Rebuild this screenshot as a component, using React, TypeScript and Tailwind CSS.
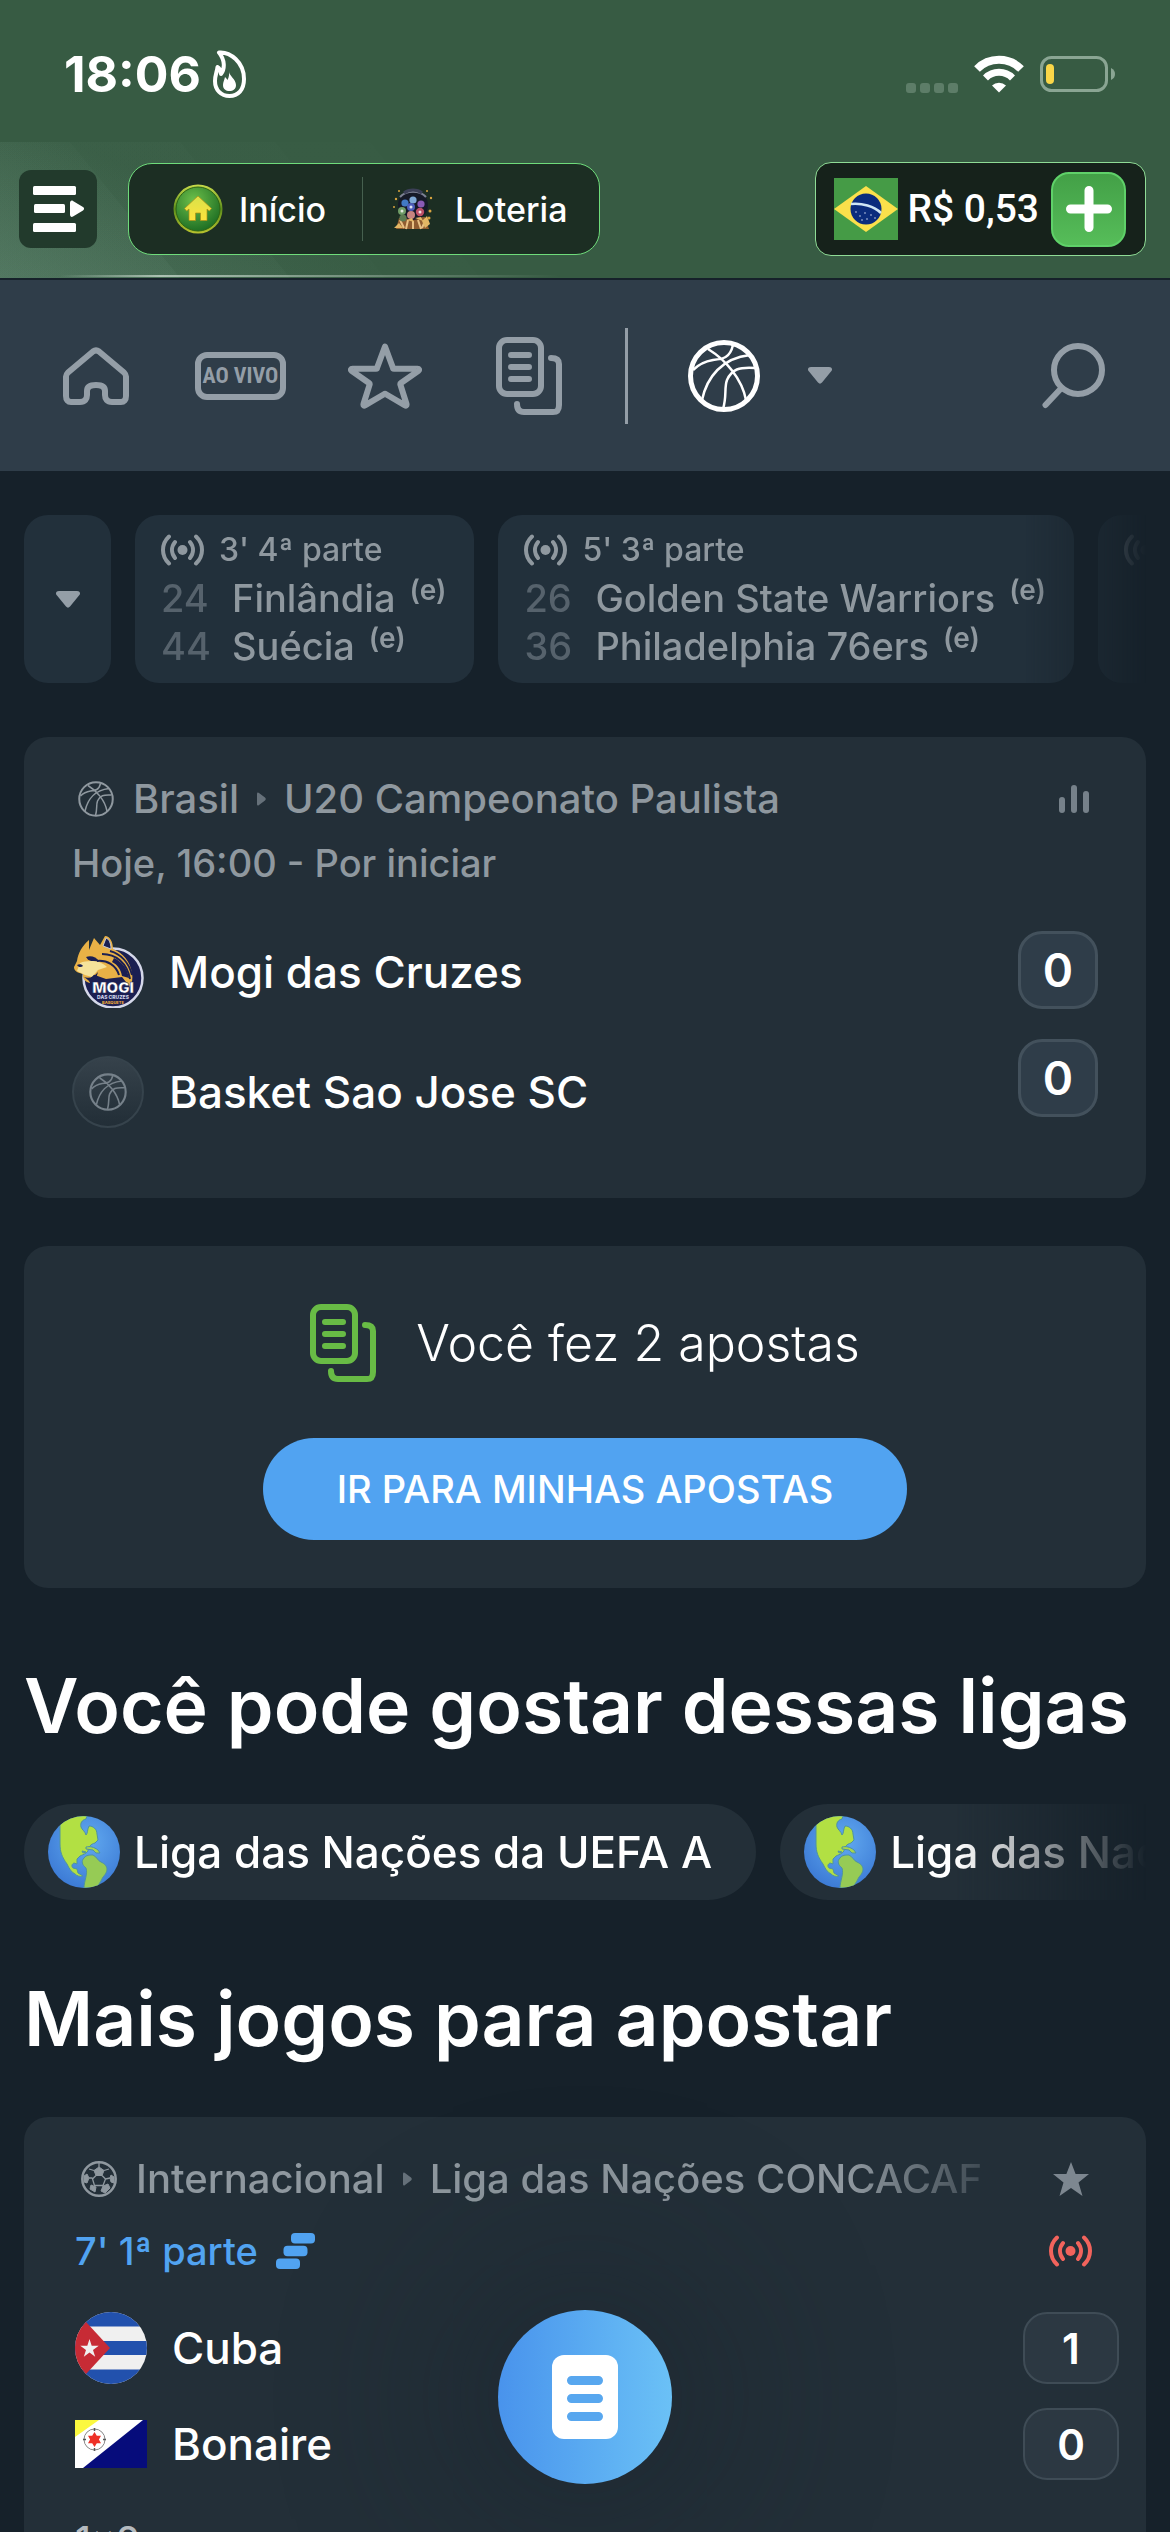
import type { ReactNode } from "react";

type IconProps = { className?: string };

const FlameIcon = ({ className }: IconProps) => (
  <svg viewBox="0 0 33 48" className={className} fill="none" aria-hidden="true">
    <path d="M6 2.500C17 1.500 31 12 31 29c0 11-6 17-14.500 17S2 40 2 31c0-6 2-9 2.500-14 2 1 3 3 3.500 7 4-5 4-14-2-21.500z" stroke="#fff" strokeWidth="4" strokeLinejoin="round" />
    <path d="M16 21c0 5 7 8 7 14 0 4-3 6-6.500 6S10 39 10 35c0-3 1.500-5 2-8 1 1 2 2 2.500 3 1.500-3 2-6 1.500-9z" fill="#fff" />
  </svg>
);

const WifiIcon = ({ className }: IconProps) => (
  <svg viewBox="0 0 50 38" className={className} fill="none" aria-hidden="true">
    <path d="M3 14a31 31 0 0 1 44 0" stroke="#fff" strokeWidth="8" />
    <path d="M11.500 23a19 19 0 0 1 27 0" stroke="#fff" strokeWidth="7" />
    <path d="M18 30.500a10 10 0 0 1 14 0L25 37.500z" fill="#fff" />
  </svg>
);

const BatteryIcon = ({ className }: IconProps) => (
  <svg viewBox="0 0 76 36" className={className} fill="none" aria-hidden="true">
    <rect x="1.500" y="1.500" width="65" height="33" rx="10" stroke="#8aa593" strokeWidth="3" />
    <path d="M71 12c3 1.500 4 3.500 4 6s-1 4.500-4 6z" fill="#8aa593" />
    <rect x="6" y="8" width="8" height="20" rx="4" fill="#fad648" />
  </svg>
);

const MenuIcon = ({ className }: IconProps) => (
  <svg viewBox="0 0 51 46" className={className} fill="#fff" aria-hidden="true">
    <rect x="0" y="0" width="43" height="9" rx="1.500" />
    <rect x="1" y="18" width="31" height="9" rx="1.500" />
    <rect x="0" y="37" width="43" height="9" rx="1.500" />
    <path d="M37 17c0-2 1.500-3 3-2l10 6c1.500 1 1.500 2.500 0 3.500l-10 6c-1.500 1-3 0-3-2z" />
  </svg>
);

const CasinoHomeIcon = ({ className }: IconProps) => (
  <svg viewBox="0 0 50 50" className={className} aria-hidden="true">
    <defs>
      <linearGradient id="coinRim" x1="0" y1="0" x2="0" y2="1">
        <stop offset="0" stopColor="#c9dc4b" />
        <stop offset="0.500" stopColor="#5f8f1c" />
        <stop offset="1" stopColor="#b7c22e" />
      </linearGradient>
      <radialGradient id="coinFace" cx="0.400" cy="0.300" r="0.800">
        <stop offset="0" stopColor="#6cbf4a" />
        <stop offset="1" stopColor="#15651f" />
      </radialGradient>
      <linearGradient id="coinHouse" x1="0" y1="0" x2="0" y2="1">
        <stop offset="0" stopColor="#d8e24a" />
        <stop offset="1" stopColor="#ffe23c" />
      </linearGradient>
    </defs>
    <circle cx="25" cy="25" r="24.500" fill="url(#coinRim)" />
    <circle cx="25" cy="25" r="22" fill="url(#coinFace)" stroke="#2c6414" strokeWidth="1" />
    <path d="M25 12L11.500 24.500l2.200 2.500 2.300-2v11.500h6.500V29h5v7.500H34V25l2.300 2 2.200-2.500z" fill="url(#coinHouse)" stroke="#b08f16" strokeWidth="0.700" />
  </svg>
);

const LotteryIcon = ({ className }: IconProps) => (
  <svg viewBox="0 0 44 44" className={className} aria-hidden="true">
    <path d="M8 31l-3 11h33l-4-12z" fill="#8f5c30" />
    <path d="M9 33l4 8M17 33l-2 9M22 34v8M27 33l3 9M34 34l-3 7" stroke="#e8c084" strokeWidth="2" />
    <circle cx="22" cy="18" r="15" fill="#161a28" />
    <path d="M9 10c6-7 20-7 26 0" stroke="#7d8194" strokeWidth="2" fill="none" />
    <path d="M13 6c5-4 13-4 18 0" stroke="#3b3f56" strokeWidth="3" fill="none" />
    <circle cx="14" cy="16" r="3.600" fill="#4179c4" />
    <circle cx="22" cy="13" r="3.600" fill="#7fa9d6" />
    <circle cx="30" cy="17" r="3.600" fill="#8a5ab5" />
    <circle cx="11" cy="24" r="4" fill="#6f9c67" />
    <circle cx="20" cy="20" r="4" fill="#4c5cb8" />
    <circle cx="29" cy="25" r="4.200" fill="#bb4f66" />
    <circle cx="20" cy="28" r="4" fill="#c68480" />
    <circle cx="12" cy="31" r="3.600" fill="#5c7b52" />
    <circle cx="11" cy="24" r="1.500" fill="#dfe6dc" />
    <circle cx="20" cy="20" r="1.500" fill="#dfe2f0" />
    <circle cx="29" cy="25" r="1.500" fill="#f0dde0" />
    <path d="M3 41l5-5 4 5zM31 34l5-5 3 8-5 4zM16 33l5-2 2 4zM24 31l6-1 2 4z" fill="#e3b765" />
    <g fill="#d9a441">
      <circle cx="5" cy="12" r="1.200" /><circle cx="40" cy="11" r="1.200" /><circle cx="39" cy="24" r="1.500" />
      <circle cx="3" cy="20" r="1" /><circle cx="8" cy="4" r="1" /><circle cx="36" cy="4" r="1" /><circle cx="38" cy="31" r="1.500" />
    </g>
  </svg>
);

const BrazilFlag = ({ className }: IconProps) => (
  <svg viewBox="0 0 64 62" className={className} role="img" aria-label="Brasil">
    <rect width="64" height="62" fill="#459b46" />
    <path d="M32 8l32 23-32 23L0 31z" fill="#fbe04b" />
    <circle cx="32" cy="31" r="15.500" fill="#0b2c7d" />
    <path d="M17 26c11-1 23 2 30 9" stroke="#cfe6f5" strokeWidth="2.500" fill="none" />
    <g fill="#c9d3ea">
      <circle cx="22" cy="34" r="0.800" /><circle cx="26" cy="38" r="0.800" /><circle cx="31" cy="35" r="0.800" />
      <circle cx="33" cy="41" r="0.800" /><circle cx="37" cy="37" r="0.800" /><circle cx="41" cy="40" r="0.800" /><circle cx="28" cy="42" r="0.800" />
    </g>
  </svg>
);

const HouseIcon = ({ className }: IconProps) => (
  <svg viewBox="0 0 66 58" className={className} fill="none" stroke="currentColor" strokeWidth="6" strokeLinejoin="round" aria-hidden="true">
    <path d="M30 4.500L5 25.500c-1.500 1.500-2 2.500-2 4V49c0 4 2 6 5 6h9c5 0 7-3 7-7v-4c0-4 3-6 9-6s9 2 9 6v4c0 4 2 7 7 7h9c3 0 5-2 5-6V29.500c0-1.500-.5-2.500-2-4L36 4.500c-2-1.500-4-1.500-6 0z" />
  </svg>
);

const StarOutline = ({ className }: IconProps) => (
  <svg viewBox="0 0 74 66" className={className} fill="none" stroke="currentColor" strokeWidth="6" strokeLinejoin="round" aria-hidden="true">
    <path d="M37 3.500l8 21.500c0 .500.500.700 1 .700h23.500c1.500 0 2 1 1 2L53 40c-.7.500-.8 1-.6 1.700L58.500 61c.3 1.500-.5 2-1.500 1.300L37.600 51c-.4-.3-.8-.3-1.200 0L17 62.300c-1 .7-1.800.2-1.500-1.300L21.600 41.700c.2-.7.100-1.200-.6-1.700L3.500 27.700c-1-1-.5-2 1-2H28c.5 0 1-.2 1-.7z" />
  </svg>
);

const SlipsIcon = ({ className }: IconProps) => (
  <svg viewBox="0 0 66 78" className={className} fill="none" stroke="currentColor" strokeWidth="6" strokeLinecap="round" aria-hidden="true">
    <rect x="3" y="3" width="42" height="54" rx="8" />
    <path d="M15 18h18M15 30h18M15 42h18M55 21c5 0 8 2 8 6v41c0 5-2 7-6 7H28c-5 0-7-3-7-8" />
  </svg>
);

const BasketballIcon = ({ className, ring = 5, seam = 2.5 }: IconProps & { ring?: number; seam?: number }) => (
  <svg viewBox="0 0 72 72" className={className} fill="none" stroke="currentColor" aria-hidden="true">
    <circle cx="36" cy="36" r="33.500" strokeWidth={ring} />
    <path d="M20 9c18 11 34 30 38 51M45 5c-3 13-10 14-20 15-9 1.500-15 5-20 10M62 15c-28 3-43 22-48 45M67 28c-16-1-23 1-28 12-3 8 0 16-4 29" strokeWidth={seam} />
  </svg>
);

const CaretDown = ({ className }: IconProps) => (
  <svg viewBox="0 0 24 17" className={className} fill="currentColor" aria-hidden="true">
    <path d="M3 0h18c3 0 4 2.500 2 4.500l-9 11c-1.300 1.500-2.700 1.500-4 0l-9-11C-1 2.500 0 0 3 0z" />
  </svg>
);

const CaretRight = ({ className }: IconProps) => (
  <svg viewBox="0 0 9 14" className={className} fill="currentColor" aria-hidden="true">
    <path d="M0 2c0-1.500 1-2 2-1l6 4.500c1 1 1 2 0 3L2 13c-1 1-2 .5-2-1z" />
  </svg>
);

const SearchIcon = ({ className }: IconProps) => (
  <svg viewBox="0 0 64 66" className={className} fill="none" stroke="currentColor" strokeWidth="6" strokeLinecap="round" aria-hidden="true">
    <circle cx="36" cy="27" r="24" />
    <path d="M18.500 46L3.500 62" />
  </svg>
);

const LiveIcon = ({ className }: IconProps) => (
  <svg viewBox="0 0 43 32" className={className} fill="none" stroke="currentColor" strokeWidth="4" strokeLinecap="round" aria-hidden="true">
    <circle cx="21.500" cy="16" r="5" fill="currentColor" stroke="none" />
    <path d="M14 8c-4 5-4 11 0 16M29 8c4 5 4 11 0 16M8 2.500C0 10 0 22 8 29.500M35 2.500c8 7.500 8 19.500 0 27" />
  </svg>
);

const BarsIcon = ({ className }: IconProps) => (
  <svg viewBox="0 0 30 28" className={className} fill="currentColor" aria-hidden="true">
    <rect x="0" y="12" width="6" height="16" rx="3" />
    <rect x="12" y="0" width="6" height="28" rx="3" />
    <rect x="24" y="6" width="6" height="22" rx="3" />
  </svg>
);

const MogiLogo = ({ className }: IconProps) => (
  <svg viewBox="0 0 72 72" className={className} role="img" aria-label="Mogi das Cruzes">
    <circle cx="41" cy="42" r="29.500" fill="#1b1f52" stroke="#d5d8ea" strokeWidth="2.500" />
    <path d="M17 14L22 2l6 7 5-9c5 0 8 6 8 13 10 4 17 12 19 24 1 6 0 10-2 14l-8-10-16 2-14-5-2 9c-5-1-8-5-7-9-5-1-9-3-9-7l3-6c1-8 5-15 12-21z" fill="#e9b146" />
    <path d="M31 10l3-8c3 1 5 5 5 11z" fill="#1b1f52" stroke="#c9cbd6" strokeWidth="1" />
    <path d="M14 21c5-2 10 0 13 4-5 1-10 1-13-4z" fill="#1b1f52" />
    <path d="M8 27c8-3 20-3 27 4l-9 3-6 7-7-2-8-4z" fill="#f6e29a" />
    <path d="M5 29c2-1 5-1 6 1-2 2-5 1-6-1z" fill="#1b1f52" />
    <path d="M42 22c8 4 13 10 15 20l-7-2c-1-6-4-11-10-14z" fill="#1b1f52" />
    <path d="M30 18c14 0 25 9 28 25M38 15c11 3 19 12 22 24M25 25c10-1 19 4 22 14" stroke="#1b1f52" strokeWidth="2" fill="none" />
    <path d="M12 41c5 2 10 0 14-5l-3 10-5 4c1-3 0-5-6-9z" fill="#1b1f52" />
    <text x="41" y="57" textAnchor="middle" fontFamily="Inter, sans-serif" fontWeight="900" fontSize="15" fill="#fff" stroke="#1b1f52" strokeWidth="0.500">MOGI</text>
    <text x="41" y="63" textAnchor="middle" fontFamily="Inter, sans-serif" fontWeight="800" fontSize="5" fill="#cfd3e8">DAS CRUZES</text>
    <text x="41" y="68" textAnchor="middle" fontFamily="Inter, sans-serif" fontWeight="800" fontSize="4" fill="#e9a93a">BASQUETE</text>
  </svg>
);

const GlobeIcon = ({ className }: IconProps) => (
  <svg viewBox="0 0 72 72" className={className} aria-hidden="true">
    <defs>
      <radialGradient id="ocean" cx="0.550" cy="0.350" r="0.700">
        <stop offset="0" stopColor="#62aaf0" />
        <stop offset="1" stopColor="#3a78d4" />
      </radialGradient>
      <clipPath id="globeClip"><circle cx="36" cy="36" r="36" /></clipPath>
    </defs>
    <circle cx="36" cy="36" r="36" fill="url(#ocean)" />
    <g clipPath="url(#globeClip)" stroke="#4f93a0" strokeWidth="1">
      <path d="M12 9C20 0 30-1 39 0l-1 3c-4 1-6 4-5 8 1 3 4 4 5 8 2-2 1-5 3-9 4 0 8 3 8 8l1 6-3 3c-4 1-7 4-7 8-2 3-6 4-8 5l-3 3 0 5-3-1c-2 1-3 3-1 5l4 1 1 4 5 3c-3 1-6 0-8-2-4-2-6-6-8-10-5-7-7-12-7-20z" fill="#b2e043" />
      <path d="M36 42c2-3 6-3 9-3 4 2 5 6 8 7 4 2 6 4 6 8-1 5-4 6-5 9-2 4-4 6-5 9H36c0-7 4-14 2-20-4-3-5-7-2-10z" fill="#96cb55" />
      <path d="M38 31c4-1 8 0 12 3l2 3-4 0-3-3-7-1zM34 35l4 1-3 1z" fill="#a6d64e" />
    </g>
  </svg>
);

const SoccerIcon = ({ className }: IconProps) => (
  <svg viewBox="0 0 36 36" className={className} fill="none" stroke="currentColor" aria-hidden="true">
    <circle cx="18" cy="18" r="16.700" strokeWidth="2.500" />
    <path d="M18 6l5 3.500-2 5h-6l-2-5zM22 25l5-2 2 4-5 5-4-2zM10 24l5 2-1 5-5-3zM3 15l3-2 2 4-2 5-3-1zM30 14l3 2v6l-3-1-1-4z" fill="currentColor" strokeWidth="1" />
    <path d="M15 14.500L11.500 18l2 6.500h8.500l2.500-6.500-3.500-3.500M13 9.500L8 8M23 9.500L28 8M8 17h3.500M24.500 18l4.500-1M18 6V2" strokeWidth="1.300" />
  </svg>
);

const StarSolid = ({ className }: IconProps) => (
  <svg viewBox="0 0 36 34" className={className} fill="currentColor" aria-hidden="true">
    <path d="M18 0l4.600 12H36L25.500 20.500 29.500 34 18 26 6.500 34l4-13.500L0 12h13.400z" />
  </svg>
);

const StackIcon = ({ className }: IconProps) => (
  <svg viewBox="0 0 39 36" className={className} fill="currentColor" aria-hidden="true">
    <rect x="15" y="0" width="24" height="10.500" rx="4" />
    <rect x="7.500" y="12.700" width="24" height="10.500" rx="4" />
    <rect x="0" y="25.500" width="24" height="10.500" rx="4" />
  </svg>
);

const CubaFlag = ({ className }: IconProps) => (
  <svg viewBox="0 0 72 72" className={className} role="img" aria-label="Bandeira de Cuba">
    <clipPath id="cubaClip"><circle cx="36" cy="36" r="36" /></clipPath>
    <g clipPath="url(#cubaClip)">
      <rect width="72" height="72" fill="#f0f0f0" />
      <path d="M0 0h72v14.500H0zM0 29h72v14H0zM0 57.500h72V72H0z" fill="#2251ad" />
      <path d="M0-2l35 38L0 74z" fill="#c72b35" />
      <path d="M14.500 27l2.200 6.800h7l-5.700 4.200 2.200 6.800-5.700-4.200-5.700 4.200L11 38l-5.700-4.200h7z" fill="#f0f0f0" />
    </g>
  </svg>
);

const BonaireFlag = ({ className }: IconProps) => (
  <svg viewBox="0 0 72 48" className={className} role="img" aria-label="Bandeira de Bonaire">
    <rect width="72" height="48" fill="#fff" />
    <path d="M0 0h24L0 17z" fill="#fbf83f" />
    <path d="M72 0v48H8L68 0z" fill="#060c7b" />
    <circle cx="19.500" cy="19.500" r="10.500" fill="none" stroke="#888" strokeWidth="1" />
    <path d="M19.500 8v3M19.500 28v3M8 19.500h3M28 19.500h3" stroke="#555" strokeWidth="1.500" />
    <path d="M19.500 12l2.300 3.700h4.200L23.900 19.500 26 23.300h-4.200L19.500 27l-2.300-3.700H13l2.100-3.800L13 15.700h4.200z" fill="#ee3127" />
  </svg>
);

const TicketIcon = ({ className }: IconProps) => (
  <svg viewBox="0 0 66 84" className={className} aria-hidden="true">
    <rect width="66" height="84" rx="12" fill="#fff" />
    <path d="M19.500 25.500h27M19.500 43.500h27M19.500 61.500h27" stroke="#58a7ef" strokeWidth="9" strokeLinecap="round" />
  </svg>
);

function LiveCard({ period, rows }: { period: string; rows: [string, string][] }) {
  return (
    <article className="h-[168px] shrink-0 rounded-3xl bg-[#22303b] pt-[11px] pr-7 pl-[26px] text-[#8f989f]">
      <p className="flex h-12 items-center gap-[15px] text-[32px] whitespace-nowrap">
        <LiveIcon className="h-8 w-[43px]" />
        {period}
      </p>
      {rows.map(([score, team]) => (
        <p key={team} className="flex h-12 items-center whitespace-nowrap text-[38px] leading-[48px]">
          <span className="w-[71px] text-[#56626c]">{score}</span>
          {team}
          <span className="ml-[14px] self-start text-[28px] leading-8 font-semibold">(e)</span>
        </p>
      ))}
    </article>
  );
}

function LeagueChip({ name }: { name: string }) {
  return (
    <button type="button" className="flex h-24 shrink-0 items-center gap-[14px] rounded-full bg-[#232f38] pr-11 pl-6 text-[44px] font-medium whitespace-nowrap text-white">
      <GlobeIcon className="size-[72px]" />
      {name}
    </button>
  );
}

function TeamRow({ logo, name }: { logo: ReactNode; name: string }) {
  return (
    <div className="flex items-center gap-[25px] text-[44px] leading-[48px] text-white">
      {logo}
      <span>{name}</span>
    </div>
  );
}

function Heading({ children }: { children: ReactNode }) {
  return <h2 className="px-6 text-[75px] leading-[88px] font-semibold whitespace-nowrap text-white">{children}</h2>;
}

export default function App() {
  return (
    <div className="flex h-screen flex-col overflow-hidden bg-[#16212a] font-['Inter',sans-serif] font-medium">
      <header className="shrink-0 border-b-2 border-[#16212a] bg-[#375b43] text-white">
        <div className="flex h-[138px] items-center justify-between pt-[10px] pr-[54px] pl-16">
          <div className="flex items-center gap-3">
            <time className="text-[50px] leading-none font-bold">18:06</time>
            <FlameIcon className="h-12 w-[33px]" />
          </div>
          <div className="flex items-center gap-4">
            <div className="flex gap-1 pt-7">
              <span className="size-[10px] rounded-[3px] bg-[#5d7d68]" />
              <span className="size-[10px] rounded-[3px] bg-[#5d7d68]" />
              <span className="size-[10px] rounded-[3px] bg-[#5d7d68]" />
              <span className="size-[10px] rounded-[3px] bg-[#5d7d68]" />
            </div>
            <WifiIcon className="h-[38px] w-[50px]" />
            <BatteryIcon className="h-9 w-[76px]" />
          </div>
        </div>
        <div className="relative flex h-[140px] items-center pt-[2px] pr-6 pl-[19px]">
          <svg viewBox="0 0 600 140" preserveAspectRatio="none" className="absolute inset-0 h-full w-[600px]" aria-hidden="true">
            <defs>
              <linearGradient id="sheen" gradientUnits="userSpaceOnUse" x1="0" y1="140" x2="60" y2="0">
                <stop offset="0" stopColor="#8fb8a4" stopOpacity="0.110" />
                <stop offset="1" stopColor="#8fb8a4" stopOpacity="0.020" />
              </linearGradient>
              <linearGradient id="edge" gradientUnits="userSpaceOnUse" x1="60" y1="0" x2="560" y2="0">
                <stop offset="0" stopColor="#c5d6ca" stopOpacity="0" />
                <stop offset="0.200" stopColor="#c5d6ca" stopOpacity="0.800" />
                <stop offset="1" stopColor="#c5d6ca" stopOpacity="0" />
              </linearGradient>
            </defs>
            <g fill="url(#sheen)">
              <path d="M0 4h70l110 136H0z" />
              <path d="M0 4h180l110 136H0z" />
              <path d="M0 4h275l110 136H0z" fillOpacity="0.700" />
              <path d="M0 4h370l110 136H0z" fillOpacity="0.500" />
            </g>
            <rect x="60" y="137" width="500" height="2" fill="url(#edge)" />
          </svg>
          <button type="button" aria-label="Menu" className="relative flex size-[78px] items-center justify-center rounded-xl bg-[#223a2c]">
            <MenuIcon className="h-[46px] w-[51px]" />
          </button>
          <nav className="relative ml-[31px] flex h-[92px] items-center rounded-3xl border border-[#6fdc7b] bg-[#1c2e23] text-[34px]">
            <a href="#inicio" className="flex h-16 items-center gap-4 border-r border-[#46604f] pr-9 pl-11">
              <CasinoHomeIcon className="size-[50px]" />
              Início
            </a>
            <a href="#loteria" className="flex h-16 items-center gap-5 pr-8 pl-7">
              <LotteryIcon className="size-[44px]" />
              Loteria
            </a>
          </nav>
          <div className="relative ml-auto flex h-[94px] items-center rounded-2xl border border-[#8fdc96] bg-[#16221b] pr-[19px] pl-[18px]">
            <BrazilFlag className="h-[62px] w-16" />
            <span className="ml-[9px] font-['Roboto',sans-serif] text-[39px] font-medium">R$ 0,53</span>
            <button type="button" aria-label="Depositar" className="ml-3 flex size-[75px] items-center justify-center rounded-[18px] border-2 border-[#5fd169] bg-linear-to-b from-[#43a047] to-[#56bd59]">
              <svg viewBox="0 0 46 46" className="size-[46px]" stroke="#fff" strokeWidth="9" strokeLinecap="round" aria-hidden="true">
                <path d="M23 4.500v37M4.500 23h37" />
              </svg>
            </button>
          </div>
        </div>
      </header>

      <nav className="flex h-[191px] shrink-0 items-center bg-[#2f3d49] pr-16 pl-[63px] text-[#949ea7]">
        <a href="#home" aria-label="Início"><HouseIcon className="h-[60px] w-[66px]" /></a>
        <a href="#ao-vivo" className="ml-[66px] flex h-12 w-[91px] items-center justify-center rounded-xl border-6 border-[#949ea7] font-['Roboto_Condensed','Liberation_Sans_Narrow','Roboto',sans-serif] text-[22px] leading-none font-bold whitespace-nowrap">AO VIVO</a>
        <a href="#favoritos" aria-label="Favoritos" className="ml-[62px]"><StarOutline className="h-[66px] w-[74px]" /></a>
        <a href="#apostas" aria-label="Minhas apostas" className="ml-[74px]"><SlipsIcon className="h-[78px] w-[66px]" /></a>
        <span className="ml-[63px] h-24 w-[3px] bg-[#949ea7]" />
        <button type="button" aria-label="Basquete" className="ml-15 flex items-center gap-12">
          <BasketballIcon className="size-[72px] text-white" />
          <CaretDown className="h-[17px] w-6" />
        </button>
        <button type="button" aria-label="Buscar" className="ml-auto"><SearchIcon className="h-[66px] w-16" /></button>
      </nav>

      <main className="flex flex-1 flex-col">
        <section className="flex gap-6 px-6 pt-11" aria-label="Ao vivo">
          <button type="button" aria-label="Expandir" className="flex h-[168px] w-[87px] shrink-0 items-center justify-center rounded-3xl bg-[#22303b] text-[#949ea7]">
            <CaretDown className="h-[17px] w-6" />
          </button>
          <div className="flex min-w-0 flex-1 gap-6 overflow-hidden mask-r-from-88% mask-r-to-100%">
            <LiveCard period="3' 4ª parte" rows={[["24", "Finlândia"], ["44", "Suécia"]]} />
            <LiveCard period="5' 3ª parte" rows={[["26", "Golden State Warriors"], ["36", "Philadelphia 76ers"]]} />
            <article className="h-[168px] w-[340px] shrink-0 rounded-3xl bg-[#22303b] px-[26px] pt-[11px] text-[#8f989f]">
              <p className="flex h-12 items-center"><LiveIcon className="h-8 w-[43px]" /></p>
            </article>
          </div>
        </section>

        <section className="mx-6 mt-[54px] h-[461px] shrink-0 rounded-3xl bg-[#232f38] px-12 pt-[38px]">
          <div className="flex h-12 items-center text-[40px] text-[#8f989f]">
            <BasketballIcon className="mx-[6px] size-9" ring={4} seam={3} />
            <span className="ml-[13px]">Brasil</span>
            <CaretRight className="mx-[18px] h-[14px] w-[9px] text-[#66717a]" />
            <span>U20 Campeonato Paulista</span>
            <BarsIcon className="mr-[9px] ml-auto h-7 w-[30px] text-[#76818a]" />
          </div>
          <p className="mt-4 text-[38px] leading-[48px] text-[#8f989f]">Hoje, 16:00 - Por iniciar</p>
          <div className="mt-11 flex justify-between">
            <div className="flex flex-col gap-12 pt-[5px]">
              <TeamRow name="Mogi das Cruzes" logo={<MogiLogo className="size-[72px]" />} />
              <TeamRow
                name="Basket Sao Jose SC"
                logo={
                  <span className="flex size-[72px] items-center justify-center rounded-full border-2 border-[#36434c] bg-linear-to-b from-[#36424b] to-[#222e37] text-[#76818a]">
                    <BasketballIcon className="size-[38px]" ring={4} seam={3} />
                  </span>
                }
              />
            </div>
            <div className="flex flex-col gap-[30px] text-[46px] font-semibold text-white">
              <span className="flex h-[78px] w-20 items-center justify-center rounded-3xl border-3 border-[#43515c] bg-[#2f3d49]">0</span>
              <span className="flex h-[78px] w-20 items-center justify-center rounded-3xl border-3 border-[#43515c] bg-[#2f3d49]">0</span>
            </div>
          </div>
        </section>

        <section className="mx-6 mt-12 flex h-[342px] shrink-0 flex-col items-center rounded-3xl bg-[#232f38] pt-[58px]">
          <div className="flex items-center gap-10 text-white">
            <SlipsIcon className="h-[78px] w-[66px] text-[#68bb45]" />
            <p className="text-[50px] leading-[60px] font-light">Você fez 2 apostas</p>
          </div>
          <button type="button" className="mt-14 h-[102px] rounded-full bg-[#51a3f1] px-[74px] text-[38px] text-white">IR PARA MINHAS APOSTAS</button>
        </section>

        <div className="mt-[74px]"><Heading>Você pode gostar dessas ligas</Heading></div>
        <div className="mx-6 mt-[54px] flex shrink-0 gap-6 overflow-hidden mask-r-from-83% mask-r-to-100%">
          <LeagueChip name="Liga das Nações da UEFA A" />
          <LeagueChip name="Liga das Nações da UEFA B" />
        </div>

        <div className="mt-[75px]"><Heading>Mais jogos para apostar</Heading></div>
        <section className="mx-6 mt-[54px] shrink-0 rounded-3xl bg-[#232f38] pt-[38px] pr-[27px] pb-16 pl-[51px]">
          <div className="flex h-12 items-center justify-between pr-[30px] text-[40px] text-[#8f989f]">
            <div className="flex w-[910px] min-w-0 items-center whitespace-nowrap mask-r-from-85% mask-r-to-105%">
              <SoccerIcon className="mx-[6px] size-9 shrink-0" />
              <span className="ml-[13px]">Internacional</span>
              <CaretRight className="mx-[18px] h-[14px] w-[9px] shrink-0 text-[#66717a]" />
              <span>Liga das Nações CONCACAF</span>
            </div>
            <button type="button" aria-label="Favoritar"><StarSolid className="h-[34px] w-9 text-[#7d8790]" /></button>
          </div>
          <div className="mt-6 flex h-12 items-center pr-[27px] text-[38px] text-[#51a3f1]">
            <span>7' 1ª parte</span>
            <StackIcon className="ml-[18px] h-9 w-[39px]" />
            <LiveIcon className="ml-auto h-8 w-[43px] text-[#f2635c]" />
          </div>
          <div className="mt-[37px] flex justify-between">
            <div className="flex flex-col gap-6">
              <TeamRow name="Cuba" logo={<CubaFlag className="size-[72px]" />} />
              <TeamRow name="Bonaire" logo={<span className="flex size-[72px] items-center"><BonaireFlag className="h-12 w-[72px]" /></span>} />
            </div>
            <div className="flex flex-col gap-6 text-[42px] font-semibold text-white">
              <span className="flex h-[72px] w-24 items-center justify-center rounded-3xl border-2 border-[#3f4c56] bg-[#2c3842]">1</span>
              <span className="flex h-[72px] w-24 items-center justify-center rounded-3xl border-2 border-[#3f4c56] bg-[#2c3842]">0</span>
            </div>
          </div>
          <p className="mt-9 text-[38px] leading-[48px] text-[#b4babf]">1x2</p>
        </section>
      </main>

      <button type="button" aria-label="Cupom de apostas" className="fixed bottom-12 left-1/2 flex size-[174px] -translate-x-1/2 items-center justify-center rounded-full bg-linear-to-r from-[#4993ec] to-[#6bc1f6] shadow-[0_0_160px_60px_rgba(22,33,42,0.35)]">
        <TicketIcon className="h-[84px] w-[66px]" />
      </button>
    </div>
  );
}
